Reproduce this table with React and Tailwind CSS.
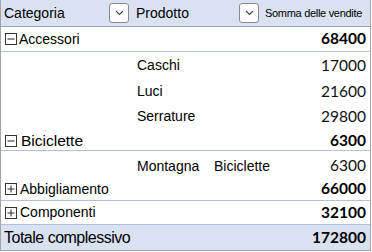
import React from "react";

const lab = { fontFamily: '"Liberation Sans", Arial, sans-serif' };
const num = { fontFamily: 'Lato, "Liberation Sans", sans-serif' };

function DropBtn() {
  return (
    <div className="w-[20px] h-[20px] bg-white border border-[#8a8a8a] rounded-[3px] flex items-center justify-center">
      <svg width="9" height="6" viewBox="0 0 9 6">
        <polyline points="1,1 4.5,4.5 8,1" fill="none" stroke="#444" strokeWidth="1.1" />
      </svg>
    </div>
  );
}

function Box({ plus }) {
  return (
    <svg width="12" height="12" viewBox="0 0 12 12" className="shrink-0">
      <rect x="0.5" y="0.5" width="11" height="11" fill="white" stroke="#333" strokeWidth="1" />
      <line x1="2.5" y1="6" x2="9.5" y2="6" stroke="#222" strokeWidth="1" />
      {plus && <line x1="6" y1="2.5" x2="6" y2="9.5" stroke="#222" strokeWidth="1" />}
    </svg>
  );
}

function SubRow({ name, val, h = "h-[25px]" }) {
  return (
    <div className={`flex items-center ${h}`}>
      <div className="w-[136px]" />
      <div className="flex-1 text-[14px] text-black" style={lab}>{name}</div>
      <div className="pr-[4px] text-[15.5px] text-[#111]" style={num}>{val}</div>
    </div>
  );
}

export default function App() {
  return (
    <div className="w-[372px] h-[252px] bg-white">
      <div className="w-[371px] h-[251px] border-l border-r border-b border-[#a3a3a3] flex flex-col">
        <div className="h-[27px] bg-[#dae2f2] border-b border-[#8fa6d4] flex items-center">
          <div className="w-[108px] pl-[3px] text-[14px] text-black" style={lab}>Categoria</div>
          <DropBtn />
          <div className="w-[110px] pl-[7px] text-[14px] text-black" style={lab}>Prodotto</div>
          <DropBtn />
          <div className="flex-1 pl-[6px] text-[11px] tracking-[-0.3px] text-black whitespace-nowrap" style={lab}>Somma delle vendite</div>
        </div>
        <div className="h-[25px] border-b border-[#b3c0dc] flex items-center">
          <div className="pl-[4px] flex items-center gap-[2px] flex-1">
            <Box />
            <span className="text-[14px] text-black" style={lab}>Accessori</span>
          </div>
          <div className="pr-[4px] text-[15.5px] font-bold text-black" style={num}>68400</div>
        </div>
        <SubRow name="Caschi" val="17000" h="h-[27px]" />
        <SubRow name="Luci" val="21600" />
        <SubRow name="Serrature" val="29800" />
        <div className="h-[22px] border-b border-[#b3c0dc] flex items-center pt-[2px]">
          <div className="pl-[4px] flex items-center gap-[4px] flex-1">
            <Box />
            <span className="text-[15.5px] text-black" style={lab}>Biciclette</span>
          </div>
          <div className="pr-[4px] text-[15.5px] font-bold text-black" style={num}>6300</div>
        </div>
        <div className="h-[27px] flex items-center pt-[3px]">
          <div className="w-[136px]" />
          <div className="w-[77px] text-[14px] text-black" style={lab}>Montagna</div>
          <div className="flex-1 text-[14px] text-black" style={lab}>Biciclette</div>
          <div className="pr-[4px] text-[15.5px] text-[#111]" style={num}>6300</div>
        </div>
        <div className="h-[23px] border-b border-[#b3c0dc] flex items-center">
          <div className="pl-[4px] flex items-center gap-[3px] flex-1">
            <Box plus />
            <span className="text-[14px] text-black" style={lab}>Abbigliamento</span>
          </div>
          <div className="pr-[4px] text-[15.5px] font-bold text-black" style={num}>66000</div>
        </div>
        <div className="h-[24px] border-b border-[#b3c0dc] flex items-center">
          <div className="pl-[4px] flex items-center gap-[3px] flex-1">
            <Box plus />
            <span className="text-[14px] text-black" style={lab}>Componenti</span>
          </div>
          <div className="pr-[4px] text-[15.5px] font-bold text-black" style={num}>32100</div>
        </div>
        <div className="flex-1 bg-[#dae2f2] flex items-center">
          <div className="flex-1 pl-[3px] text-[16px] tracking-[-0.5px] text-black" style={lab}>Totale complessivo</div>
          <div className="pr-[4px] text-[15.5px] font-bold text-black" style={num}>172800</div>
        </div>
      </div>
    </div>
  );
}
